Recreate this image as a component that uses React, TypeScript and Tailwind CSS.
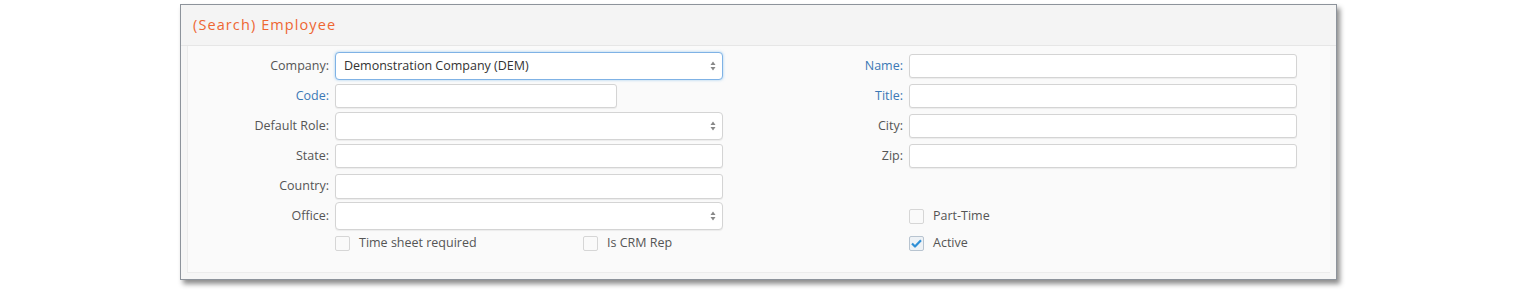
const font = { fontFamily: '"Open Sans", "Liberation Sans", sans-serif' };

const SelectArrows = () => (
  <svg width="6" height="10" viewBox="0 0 6 10" className="absolute right-[6px] top-1/2 -translate-y-1/2">
    <path d="M3 0.5 L5.5 4 H0.5 Z" fill="#888" />
    <path d="M3 9.5 L5.5 6 H0.5 Z" fill="#888" />
  </svg>
);

const TextBox = ({ w = 'w-[388px]', h = 'h-[24px]' }: { w?: string; h?: string }) => (
  <div className={`${w} ${h} bg-white border border-[#d4d4d4] rounded-[3px] shadow-[0_1px_1px_rgba(0,0,0,0.06)]`} />
);

const SelectBox = ({ value, focused }: { value?: string; focused?: boolean }) => (
  <div
    className={`relative w-[388px] h-[28px] bg-white rounded-[4px] flex items-center pl-[8px] text-[12.5px] text-[#333] ${
      focused
        ? 'border border-[#7fb2e5] shadow-[0_0_3px_rgba(102,175,233,0.6)]'
        : 'border border-[#d4d4d4] shadow-[0_1px_1px_rgba(0,0,0,0.06)]'
    }`}
  >
    {value}
    <SelectArrows />
  </div>
);

const Check = ({ label, checked }: { label: string; checked?: boolean }) => (
  <div className="flex items-center gap-[9px]">
    <div
      className={`w-[15px] h-[15px] border rounded-[2px] flex items-center justify-center ${
        checked ? 'border-[#b8c4d0] bg-[#eef2f6]' : 'border-[#d6d6d6] bg-[#fafafa]'
      }`}
    >
      {checked && (
        <svg width="11" height="9" viewBox="0 0 11 9">
          <path d="M1 4.5 L4 7.5 L10 1.2" stroke="#2f8fd6" strokeWidth="2.2" fill="none" strokeLinejoin="round" />
        </svg>
      )}
    </div>
    <span className="text-[12.5px] text-[#555]">{label}</span>
  </div>
);

const Label = ({ text, blue }: { text: string; blue?: boolean }) => (
  <div className={`text-right text-[12.5px] ${blue ? 'text-[#3b78b5]' : 'text-[#555]'}`}>{text}</div>
);

export default function App() {
  return (
    <div className="w-[1522px] h-[301px] bg-white pt-[4px]" style={font}>
      <div className="ml-[180px] w-[1157px] border border-[#8d939b] bg-[#f6f6f6] shadow-[3px_4px_5px_rgba(0,0,0,0.45)]">
        <div className="h-[41px] bg-[#f4f4f4] border-b border-[#e6e6e6] flex items-center pl-[12px]">
          <span className="text-[14.5px] text-[#ee6632] tracking-[1.1px]">(Search) Employee</span>
        </div>
        <div className="pl-[6px] pr-[6px] pb-[6px]">
          <div className="bg-[#fafafa] border-l border-b border-[#ececec] pt-[5px] pb-[17px]">
            <div className="grid grid-cols-[141px_388px_174px_388px] grid-rows-[30px_30px_30px_30px_30px_30px_24px] gap-x-[6px] items-center">
              <Label text="Company:" />
              <SelectBox value="Demonstration Company (DEM)" focused />
              <Label text="Name:" blue />
              <TextBox />

              <Label text="Code:" blue />
              <TextBox w="w-[282px]" />
              <Label text="Title:" blue />
              <TextBox />

              <Label text="Default Role:" />
              <SelectBox />
              <Label text="City:" />
              <TextBox />

              <Label text="State:" />
              <TextBox />
              <Label text="Zip:" />
              <TextBox />

              <Label text="Country:" />
              <TextBox h="h-[25px]" />
              <div />
              <div />

              <Label text="Office:" />
              <SelectBox />
              <div />
              <Check label="Part-Time" />

              <div />
              <div className="flex items-center">
                <div className="w-[248px]">
                  <Check label="Time sheet required" />
                </div>
                <Check label="Is CRM Rep" />
              </div>
              <div />
              <Check label="Active" checked />
            </div>
          </div>
        </div>
      </div>
    </div>
  );
}
